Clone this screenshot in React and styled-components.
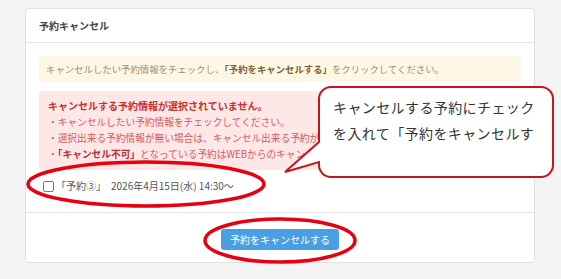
import React from "react";
import styled, { createGlobalStyle } from "styled-components";

const Global = createGlobalStyle`
  html, body { margin: 0; padding: 0; background: #f4f4f4; }
  body { font-family: "Noto Sans CJK JP", "Noto Sans", sans-serif; }
`;

const Page = styled.div`
  position: relative;
  width: 561px;
  height: 279px;
  overflow: hidden;
  padding: 8px 0 0 25px;
  box-sizing: border-box;
`;

const Card = styled.section`
  width: 510px;
  background: #fff;
  border: 1px solid #e2e2e2;
  border-radius: 4px;
  box-sizing: border-box;
`;

const CardHeader = styled.header`
  padding: 10px 13px;
  line-height: 13px;
  font-size: 10px;
  font-weight: 700;
  color: #444;
  border-bottom: 1px solid #e4e4e4;
`;

const CardBody = styled.div`
  padding: 13px 13px 18px;
  border-bottom: 1px solid #e4e4e4;
  display: flex;
  flex-direction: column;
`;

const Alert = styled.div`
  border-radius: 3px;
  background: ${(p) => (p.$tone === "danger" ? "#fde7e7" : "#fdf7e5")};
  color: ${(p) => (p.$tone === "danger" ? "#d65a5c" : "#a38f6a")};
  font-size: ${(p) => (p.$tone === "danger" ? "9.7px" : "9.4px")};
  padding: ${(p) => (p.$tone === "danger" ? "7px 9px 8px" : "6px 7px")};
  line-height: ${(p) => (p.$tone === "danger" ? "16px" : "14px")};
  margin-bottom: ${(p) => (p.$tone === "danger" ? "8px" : "9px")};
`;

const Strong = styled.strong`
  font-weight: 700;
  color: ${(p) => p.$color};
`;

const AlertTitle = styled.div`
  font-weight: 700;
  font-size: 10px;
  color: #c9302c;
`;

const Line = styled.div`
  white-space: nowrap;
`;

const CheckRow = styled.label`
  display: flex;
  align-items: center;
  gap: 2px;
  padding-left: 4px;
  font-size: 10px;
  line-height: 16px;
  color: #555;
`;

const Box = styled.span`
  width: 9px;
  height: 9px;
  border: 1px solid #777;
  border-radius: 2px;
  background: #fff;
  flex: none;
`;

const DateText = styled.span`
  margin-left: 3px;
`;

const CardFooter = styled.footer`
  display: flex;
  justify-content: center;
  padding: 16px 0 12px;
`;

const Button = styled.button`
  height: 21px;
  padding: 0 9px;
  border: none;
  border-radius: 3px;
  background: #4a9ee2;
  color: #fff;
  font-family: inherit;
  font-size: 10px;
  line-height: 21px;
`;

const Overlay = styled.svg`
  position: absolute;
  left: 0;
  top: 0;
  pointer-events: none;
`;

const BubbleText = styled.div`
  position: absolute;
  left: 333px;
  top: 94px;
  font-size: 14px;
  letter-spacing: 0.4px;
  line-height: 26px;
  color: #333;
  white-space: nowrap;
`;

export default function App() {
  return (
    <>
      <Global />
      <Page>
        <Card>
          <CardHeader>予約キャンセル</CardHeader>
          <CardBody>
            <Alert $tone="warning">
              キャンセルしたい予約情報をチェックし、
              <Strong $color="#7d6130">「予約をキャンセルする」</Strong>
              をクリックしてください。
            </Alert>
            <Alert $tone="danger">
              <AlertTitle>キャンセルする予約情報が選択されていません。</AlertTitle>
              <Line>・キャンセルしたい予約情報をチェックしてください。</Line>
              <Line>・選択出来る予約情報が無い場合は、キャンセル出来る予約がありません。</Line>
              <Line>
                ・<Strong $color="#b8302f">「キャンセル不可」</Strong>
                となっている予約はWEBからのキャンセルは出来ません。
              </Line>
            </Alert>
            <CheckRow>
              <Box />
              <span>「予約③」</span>
              <DateText>2026年4月15日(水) 14:30～</DateText>
            </CheckRow>
          </CardBody>
          <CardFooter>
            <Button>予約をキャンセルする</Button>
          </CardFooter>
        </Card>
        <Overlay width="561" height="279" viewBox="0 0 561 279">
          <path
            d="M 331 87 H 541 A 12 12 0 0 1 553 99 V 165 A 12 12 0 0 1 541 177 H 331 A 12 12 0 0 1 319 165 V 162 L 285 172 L 319 142 V 99 A 12 12 0 0 1 331 87 Z"
            fill="#fff"
            stroke="#c4161c"
            strokeWidth="2"
            strokeLinejoin="miter"
          />
          <ellipse cx="146" cy="184" rx="118" ry="22" fill="none" stroke="#e60012" strokeWidth="3.5" />
          <ellipse cx="280" cy="240.5" rx="75" ry="21.5" fill="none" stroke="#e60012" strokeWidth="3.5" />
        </Overlay>
        <BubbleText>
          キャンセルする予約にチェック
          <br />
          を入れて「予約をキャンセルす
        </BubbleText>
      </Page>
    </>
  );
}
